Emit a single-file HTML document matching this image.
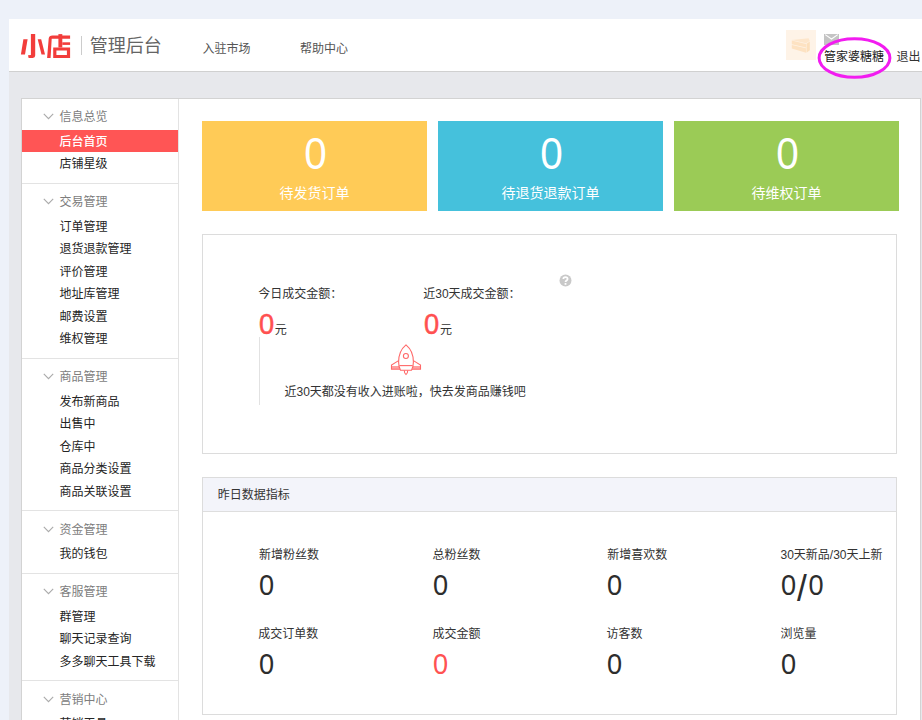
<!DOCTYPE html>
<html lang="zh-CN"><head><meta charset="utf-8"><title>小店 管理后台</title><style>
*{margin:0;padding:0;box-sizing:border-box}
html,body{width:922px;height:720px;overflow:hidden}
body{background:#edf1f9;font-family:"Liberation Sans",sans-serif;position:relative}
#page{position:absolute;left:0;top:0;width:922px;height:720px;overflow:hidden}
#main{position:absolute;left:9px;top:19px;width:913px;height:701px;background:#e7e8ec}
.hdr{position:absolute;left:9px;top:19px;width:913px;height:53px;background:#fff;border-bottom:1px solid #d0d0d0}
.box{position:absolute;left:21px;top:98px;width:900px;height:640px;background:#fff;border:1px solid #d3d3d3}
.sideline{position:absolute;left:178px;top:99px;width:1px;height:640px;background:#e3e3e3}
.sdiv{position:absolute;left:22px;width:156px;height:1px;background:#e3e3e3}
.active{position:absolute;left:22px;top:130px;width:156px;height:22px;background:#ff5555}
.t{position:absolute;color:transparent;white-space:nowrap;line-height:1;overflow:visible;font-family:"Liberation Sans","Noto Sans CJK SC",sans-serif}
.t svg{position:absolute;left:0;top:0;overflow:visible}
.card{position:absolute;top:121px;width:225px;height:90px;text-align:center}
.big{position:absolute;left:.8px;width:225px;top:8px;font-size:43.5px;line-height:50px;color:#fff;text-align:center;transform:scaleX(.93)}
.panel{position:absolute;border:1px solid #dcdcdc;background:#fff;box-sizing:content-box}
.phead{height:34px;background:#f3f4fa;border-bottom:1px solid #dedede}
.rz{position:absolute;font-size:29px;line-height:36px;color:#ff5050;-webkit-text-stroke:.5px #ff5050;transform:scaleX(.94);transform-origin:0 0}
.sl{display:inline-block;width:13.6px;text-align:center;transform:translateY(3.4px) scale(1.3,1.27)}
.bz{position:absolute;font-size:29.5px;line-height:40px;color:#2d2d2d;transform:scaleX(.92);transform-origin:0 0}
</style></head><body><div id="page"><div id="main"></div>
<div class="hdr"></div>
<span class="t" style="left:20px;top:32px;font-size:25px;font-weight:bold">小店<svg width="60" height="34" viewBox="15 28 60 34" fill="#f23d3b" style="left:-5px;top:-4px">
<path d="M30.9 34.1H35.2V55.6Q35.2 57.9 32.8 57.9H28.6L28 55.2L30.9 55Z"/>
<path d="M23.4 39.3H27.6L25 54.6H20.9Z"/>
<path d="M37.7 39.3H41.2L45 54.6H41.5Z"/>
<path d="M70.1 35.4H52.5Q49 35.4 48.7 38.5L47.1 57.9H50.6L51.7 38.8H70.1Z"/>
<path d="M58.4 34.1H62.3V47.5H58.4Z"/>
<path d="M62.3 42.3H70.1V44.9H62.3Z"/>
<path fill-rule="evenodd" d="M53.2 47.5H70.1V57.9H53.2ZM56.4 50.5H66.9V54.9H56.4Z"/>
</svg></span>
<div style="position:absolute;left:81px;top:36px;width:1px;height:19px;background:#ccc"></div>
<span class="t" style="left:89.75px;top:36.70px;font-size:18px;color:#646464">管理后台</span>
<span class="t" style="left:202.50px;top:42.80px;font-size:12px;color:#555">入驻市场</span>
<span class="t" style="left:300.00px;top:42.80px;font-size:12px;color:#555">帮助中心</span>
<div style="position:absolute;left:786px;top:30px;width:30px;height:30px;background:#fef3e7">
<svg width="30" height="30" viewBox="0 0 30 30" style="position:absolute;left:0;top:0">
<path d="M5.8 9.9 L22.6 8.2 L23.8 10.9 L20 13.3 Z" fill="#fde6cb"/>
<path d="M5.8 10.5 L20 13.9 L20 17.4 L5.8 14.2 Z M5.8 15 L20 18.3 L20 22.8 L5.8 18.4 Z" fill="#fde2c2"/>
<path d="M20.5 13.8 L23.8 11.5 L23.8 20.2 L20.5 22.7 Z" fill="#fcdfbb"/>
</svg></div>
<svg width="15" height="11" viewBox="0 0 15 11" style="position:absolute;left:824px;top:34px">
<rect width="15" height="11" fill="#c4c4c4"/><path d="M1.2 0.6 L7.5 5 L13.8 0.6" fill="none" stroke="#fff" stroke-width="1.1"/></svg>
<span class="t" style="left:824.00px;top:51.40px;font-size:12px;color:#222">管家婆糖糖</span>
<span class="t" style="left:896.50px;top:51.40px;font-size:12px;color:#333">退出</span>
<svg width="80" height="46" viewBox="0 0 80 46" style="position:absolute;left:815px;top:35px">
<ellipse cx="39.5" cy="23" rx="35.4" ry="19.3" fill="none" stroke="#f21cf0" stroke-width="3"/></svg>
<div class="box"></div><div class="sideline"></div>
<svg width="11" height="7" viewBox="0 0 11 7" style="position:absolute;left:43px;top:113.2px"><path d="M0.8 0.9 L5.5 5.7 L10.2 0.9" fill="none" stroke="#ababab" stroke-width="1.15"/></svg>
<span class="t" style="left:59.50px;top:111.40px;font-size:12px;color:#7d7d7d">信息总览</span>
<div class="active"></div>
<span class="t" style="left:59.50px;top:135.65px;font-size:12px;color:#fff;font-weight:500">后台首页</span>
<span class="t" style="left:59.50px;top:158.15px;font-size:12px;color:#252525">店铺星级</span>
<div class="sdiv" style="top:183px"></div>
<svg width="11" height="7" viewBox="0 0 11 7" style="position:absolute;left:43px;top:198.2px"><path d="M0.8 0.9 L5.5 5.7 L10.2 0.9" fill="none" stroke="#ababab" stroke-width="1.15"/></svg>
<span class="t" style="left:59.50px;top:196.40px;font-size:12px;color:#7d7d7d">交易管理</span>
<span class="t" style="left:59.50px;top:220.65px;font-size:12px;color:#252525">订单管理</span>
<span class="t" style="left:59.50px;top:243.15px;font-size:12px;color:#252525">退货退款管理</span>
<span class="t" style="left:59.50px;top:265.65px;font-size:12px;color:#252525">评价管理</span>
<span class="t" style="left:59.50px;top:288.15px;font-size:12px;color:#252525">地址库管理</span>
<span class="t" style="left:59.50px;top:310.65px;font-size:12px;color:#252525">邮费设置</span>
<span class="t" style="left:59.50px;top:333.15px;font-size:12px;color:#252525">维权管理</span>
<div class="sdiv" style="top:358px"></div>
<svg width="11" height="7" viewBox="0 0 11 7" style="position:absolute;left:43px;top:373.2px"><path d="M0.8 0.9 L5.5 5.7 L10.2 0.9" fill="none" stroke="#ababab" stroke-width="1.15"/></svg>
<span class="t" style="left:59.50px;top:371.40px;font-size:12px;color:#7d7d7d">商品管理</span>
<span class="t" style="left:59.50px;top:395.65px;font-size:12px;color:#252525">发布新商品</span>
<span class="t" style="left:59.50px;top:418.15px;font-size:12px;color:#252525">出售中</span>
<span class="t" style="left:59.50px;top:440.65px;font-size:12px;color:#252525">仓库中</span>
<span class="t" style="left:59.50px;top:463.15px;font-size:12px;color:#252525">商品分类设置</span>
<span class="t" style="left:59.50px;top:485.65px;font-size:12px;color:#252525">商品关联设置</span>
<div class="sdiv" style="top:510px"></div>
<svg width="11" height="7" viewBox="0 0 11 7" style="position:absolute;left:43px;top:525.7px"><path d="M0.8 0.9 L5.5 5.7 L10.2 0.9" fill="none" stroke="#ababab" stroke-width="1.15"/></svg>
<span class="t" style="left:59.50px;top:523.90px;font-size:12px;color:#7d7d7d">资金管理</span>
<span class="t" style="left:59.50px;top:548.15px;font-size:12px;color:#252525">我的钱包</span>
<div class="sdiv" style="top:573px"></div>
<svg width="11" height="7" viewBox="0 0 11 7" style="position:absolute;left:43px;top:588.2px"><path d="M0.8 0.9 L5.5 5.7 L10.2 0.9" fill="none" stroke="#ababab" stroke-width="1.15"/></svg>
<span class="t" style="left:59.50px;top:586.40px;font-size:12px;color:#7d7d7d">客服管理</span>
<span class="t" style="left:59.50px;top:610.65px;font-size:12px;color:#252525">群管理</span>
<span class="t" style="left:59.50px;top:633.15px;font-size:12px;color:#252525">聊天记录查询</span>
<span class="t" style="left:59.50px;top:655.65px;font-size:12px;color:#252525">多多聊天工具下载</span>
<div class="sdiv" style="top:680px"></div>
<svg width="11" height="7" viewBox="0 0 11 7" style="position:absolute;left:43px;top:695.7px"><path d="M0.8 0.9 L5.5 5.7 L10.2 0.9" fill="none" stroke="#ababab" stroke-width="1.15"/></svg>
<span class="t" style="left:59.50px;top:693.90px;font-size:12px;color:#7d7d7d">营销中心</span>
<span class="t" style="left:59.50px;top:718.15px;font-size:12px;color:#252525">营销工具</span>
<div class="card" style="left:202px;background:#ffcb57"><span class="big">0</span></div>
<span class="t" style="left:279.50px;top:186.30px;font-size:14px;color:#fff">待发货订单</span>
<div class="card" style="left:438px;background:#45c1dc"><span class="big">0</span></div>
<span class="t" style="left:501.50px;top:186.30px;font-size:14px;color:#fff">待退货退款订单</span>
<div class="card" style="left:674px;background:#9bcb56"><span class="big">0</span></div>
<span class="t" style="left:751.50px;top:186.30px;font-size:14px;color:#fff">待维权订单</span>
<div class="panel" style="left:202px;top:234px;width:693px;height:218px"></div>
<span class="t" style="left:258.25px;top:287.65px;font-size:12px;color:#333">今日成交金额：</span>
<span class="t" style="left:423.25px;top:287.65px;font-size:12px;color:#333">近30天成交金额：</span>
<span class="rz" style="left:259.4px;top:306.3px">0</span>
<span class="rz" style="left:424px;top:306.3px">0</span>
<span class="t" style="left:274.70px;top:323.90px;font-size:12px;color:#333">元</span>
<span class="t" style="left:440.00px;top:323.90px;font-size:12px;color:#333">元</span>
<div style="position:absolute;left:259px;top:337px;width:1px;height:68px;background:#e2e2e2"></div>
<svg width="13" height="13" viewBox="0 0 13 13" style="position:absolute;left:559px;top:274px">
<circle cx="6.5" cy="6.5" r="6" fill="#c9c9c9"/>
<path d="M4.3 5 C4.3 2.6 8.6 2.6 8.6 5 C8.6 6.6 6.5 6.4 6.5 8.1" fill="none" stroke="#fff" stroke-width="1.7"/><rect x="5.6" y="9" width="1.8" height="1.8" fill="#fff"/></svg>
<svg width="32" height="32" viewBox="0 0 32 32" style="position:absolute;left:390px;top:344px" fill="none" stroke="#ff6868" stroke-width="1.1">
<path d="M2 22 H9 V25 H2 Z M23 22 H30.3 V25 H23 Z" fill="#ffa0a0" stroke="none"/>
<path d="M16 0.9 C11 5 8.6 11 8.6 18 C8.6 21.5 9.3 24.3 10.5 26.3 L21.5 26.3 C22.7 24.3 23.4 21.5 23.4 18 C23.4 11 21 5 16 0.9 Z"/>
<circle cx="15.9" cy="12" r="2.5"/>
<path d="M8.6 16.6 L1.5 21.1 L1.5 25.2 L10 25.2"/>
<path d="M23.4 16.6 L30.5 21.1 L30.5 25.2 L22 25.2"/>
<path d="M9.3 21.6 H22.7"/>
<path d="M14.3 26.6 C14.3 28.6 15.2 30.2 16 30.6 C16.8 30.2 17.7 28.6 17.7 26.6"/>
</svg>
<span class="t" style="left:284.50px;top:385.65px;font-size:12px;color:#333">近30天都没有收入进账啦，快去发商品赚钱吧</span>
<div class="panel" style="left:202px;top:477px;width:693px;height:236px"><div class="phead"></div></div>
<span class="t" style="left:217.75px;top:488.65px;font-size:12px;color:#333">昨日数据指标</span>
<span class="t" style="left:259.05px;top:548.65px;font-size:12px;color:#333">新增粉丝数</span>
<span class="t" style="left:258.25px;top:628.15px;font-size:12px;color:#333">成交订单数</span>
<span class="bz" style="left:258.95px;top:564.6px">0</span>
<span class="bz" style="left:258.95px;top:643.6px">0</span>
<span class="t" style="left:432.50px;top:548.65px;font-size:12px;color:#333">总粉丝数</span>
<span class="t" style="left:432.50px;top:628.15px;font-size:12px;color:#333">成交金额</span>
<span class="bz" style="left:433.2px;top:564.6px">0</span>
<span class="bz" style="left:433.2px;top:643.6px;color:#ff5252">0</span>
<span class="t" style="left:607.30px;top:548.65px;font-size:12px;color:#333">新增喜欢数</span>
<span class="t" style="left:606.50px;top:628.15px;font-size:12px;color:#333">访客数</span>
<span class="bz" style="left:607.2px;top:564.6px">0</span>
<span class="bz" style="left:607.2px;top:643.6px">0</span>
<span class="t" style="left:780.50px;top:548.65px;font-size:12px;color:#333">30天新品/30天上新</span>
<span class="t" style="left:780.50px;top:628.15px;font-size:12px;color:#333">浏览量</span>
<span class="bz" style="left:781.2px;top:564.6px">0<span class="sl">/</span>0</span>
<span class="bz" style="left:781.2px;top:643.6px">0</span>
</div></body></html>
